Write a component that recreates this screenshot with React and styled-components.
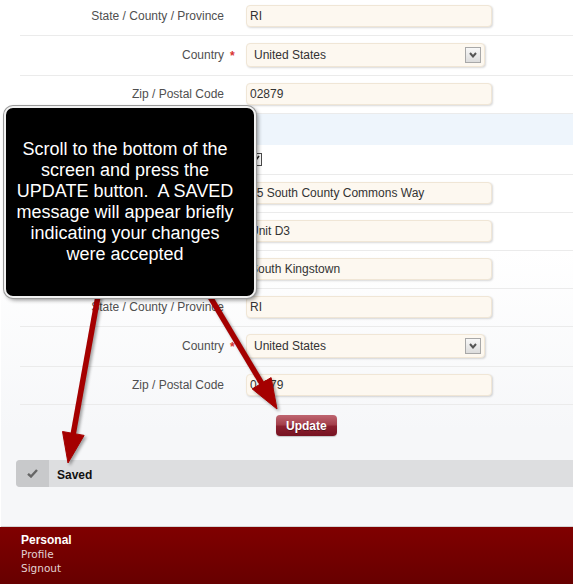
import styled, { createGlobalStyle } from 'styled-components';

const GlobalStyle = createGlobalStyle`
  html, body {
    margin: 0;
    height: 100%;
    overflow: hidden;
  }
  body {
    background: #fff;
    font-family: "Liberation Sans", Arial, sans-serif;
  }
`;

const Page = styled.div`
  position: relative;
  display: flex;
  flex-direction: column;
  width: 573px;
  height: 584px;
  overflow: hidden;
`;

const Main = styled.div`
  flex: 1;
  min-height: 0;
  margin-left: 1px;
  background: linear-gradient(180deg, #ffffff 0px, #ffffff 250px, #f6f7f9 430px, #f6f7f9 100%);
  border-bottom: 1px solid #d4d4d4;
`;

const Form = styled.div`
  margin-top: -2px;
`;

const Row = styled.div`
  display: grid;
  grid-template-columns: 204px 22px 1fr;
  align-items: center;
  margin-left: 19px;
  padding: ${(p) => (p.$tight ? '8px 0' : '7px 0 8px')};
  border-bottom: 1px solid #ebebeb;
`;

const Label = styled.div`
  text-align: right;
  font-size: 12px;
  color: #4f4f4f;
  white-space: nowrap;
`;

const Required = styled.span`
  padding-left: 6px;
  font-size: 12px;
  font-weight: bold;
  color: #d83232;
`;

const TextBox = styled.div`
  width: 246px;
  height: 22px;
  box-sizing: border-box;
  padding: 0 3px;
  line-height: 20px;
  font-size: 12px;
  color: #333;
  background: #fdf8f0;
  border: 1px solid #f0e6d6;
  border-radius: 4px;
  box-shadow: 1px 1px 2px rgba(0, 0, 0, 0.15);
  white-space: nowrap;
`;

const SelectBox = styled(TextBox)`
  width: 239px;
  height: 24px;
  padding: 0 3px 0 7px;
  display: flex;
  align-items: center;
  justify-content: space-between;
`;

const DropButton = styled.span`
  display: flex;
  align-items: center;
  justify-content: center;
  width: 16px;
  height: 16px;
  box-sizing: border-box;
  border: 1px solid #a8a8a8;
  background: linear-gradient(180deg, #f8f8f8, #dcdcdc);
`;

const SectionBand = styled.div`
  margin-left: 19px;
  height: 31px;
  background: #eef5fc;
`;

const CheckBox = styled.span`
  display: flex;
  align-items: center;
  justify-content: center;
  width: 13px;
  height: 13px;
  margin-left: 3px;
  box-sizing: border-box;
  border: 1px solid #4a4a4a;
  background: #fff;
`;

const ButtonRow = styled.div`
  padding: 10px 0 0 275px;
`;

const UpdateButton = styled.button`
  height: 21px;
  padding: 0 10px;
  border: 0;
  border-radius: 4px;
  background: linear-gradient(180deg, #bf6671 0%, #a4404c 45%, #8a1f2e 55%, #771322 100%);
  color: #fff;
  font-family: "Liberation Sans", Arial, sans-serif;
  font-size: 12px;
  font-weight: bold;
  text-shadow: 0 1px 0 rgba(0, 0, 0, 0.35);
  box-shadow: 0 1px 1px rgba(0, 0, 0, 0.2);
`;

const SavedBar = styled.div`
  display: flex;
  height: 27px;
  margin: 24px -10px 0 15px;
  border-radius: 4px;
  overflow: hidden;
  background: #dddee0;
`;

const SavedIcon = styled.span`
  display: flex;
  align-items: center;
  justify-content: center;
  width: 33px;
  background: #c8c9cb;
`;

const SavedText = styled.span`
  display: flex;
  align-items: center;
  padding: 2px 0 0 8px;
  font-size: 12px;
  font-weight: bold;
  color: #111;
`;

const Footer = styled.div`
  flex: none;
  height: 57px;
  box-sizing: border-box;
  padding: 6px 0 0 21px;
  background: linear-gradient(180deg, #800000, #670000);
`;

const FooterTitle = styled.div`
  font-size: 12px;
  font-weight: bold;
  line-height: 14px;
  color: #fff;
`;

const FooterLink = styled.div`
  font-family: "DejaVu Sans", Verdana, sans-serif;
  font-size: 10.5px;
  line-height: 14px;
  color: #e2d2d2;
`;

const Callout = styled.div`
  position: absolute;
  left: 4px;
  top: 106px;
  z-index: 2;
  width: 252px;
  height: 192px;
  box-sizing: border-box;
  display: flex;
  align-items: center;
  justify-content: center;
  padding-right: 10px;
  border: 2px solid #f2f2f2;
  border-radius: 9px;
  background: #000;
  box-shadow: 0 0 0 1px #9a9a9a, 2px 2px 4px rgba(0, 0, 0, 0.45);
  color: #fff;
  text-align: center;
  font-size: 18px;
  line-height: 21px;
`;

const Pointers = styled.svg`
  position: absolute;
  left: 0;
  top: 0;
  z-index: 1;
  pointer-events: none;
  filter: drop-shadow(2px 2px 1.5px rgba(0, 0, 0, 0.35));
`;

function Arrow({ from, to, head = 30, half = 12 }) {
  const dx = to[0] - from[0];
  const dy = to[1] - from[1];
  const len = Math.hypot(dx, dy);
  const ux = dx / len;
  const uy = dy / len;
  const bx = to[0] - ux * head;
  const by = to[1] - uy * head;
  const nx = -uy;
  const ny = ux;
  const points = [
    [to[0], to[1]],
    [bx + nx * half, by + ny * half],
    [bx - nx * half, by - ny * half],
  ]
    .map((p) => p.map((v) => v.toFixed(1)).join(','))
    .join(' ');

  return (
    <g fill="#a50000" stroke="#a50000">
      <line x1={from[0]} y1={from[1]} x2={bx + ux * 2} y2={by + uy * 2} strokeWidth="5.5" />
      <polygon points={points} strokeWidth="1" strokeLinejoin="round" />
    </g>
  );
}

const Chevron = () => (
  <svg width="8" height="6" viewBox="0 0 8 6">
    <path d="M1 1 L4 4.5 L7 1" fill="none" stroke="#555" strokeWidth="2" />
  </svg>
);

function Field({ label, value, required }) {
  return (
    <Row>
      <Label>{label}</Label>
      <span>{required && <Required>*</Required>}</span>
      <TextBox>{value}</TextBox>
    </Row>
  );
}

function CountryField() {
  return (
    <Row>
      <Label>Country</Label>
      <span>
        <Required>*</Required>
      </span>
      <SelectBox>
        United States
        <DropButton>
          <Chevron />
        </DropButton>
      </SelectBox>
    </Row>
  );
}

export default function App() {
  return (
    <>
      <GlobalStyle />
      <Page>
        <Main>
          <Form>
            <Field label="State / County / Province" value="RI" />
            <CountryField />
            <Field label="Zip / Postal Code" value="02879" />

            <SectionBand />
            <Row $tight>
              <Label />
              <span />
              <CheckBox>
                <svg width="9" height="9" viewBox="0 0 9 9">
                  <path d="M1 4.5 L3.5 7 L8 1" fill="none" stroke="#222" strokeWidth="1.6" />
                </svg>
              </CheckBox>
            </Row>
            <Field value="25 South County Commons Way" />
            <Field value="Unit D3" />
            <Field value="South Kingstown" />
            <Field label="State / County / Province" value="RI" />
            <CountryField />
            <Field label="Zip / Postal Code" value="02879" />

            <ButtonRow>
              <UpdateButton type="button">Update</UpdateButton>
            </ButtonRow>
          </Form>

          <SavedBar>
            <SavedIcon>
              <svg width="11" height="9" viewBox="0 0 11 9">
                <path d="M1 4.8 L4 7.5 L10 1" fill="none" stroke="#666" strokeWidth="2.4" />
              </svg>
            </SavedIcon>
            <SavedText>Saved</SavedText>
          </SavedBar>
        </Main>

        <Footer>
          <FooterTitle>Personal</FooterTitle>
          <FooterLink>Profile</FooterLink>
          <FooterLink>Signout</FooterLink>
        </Footer>

        <Pointers width="573" height="584" viewBox="0 0 573 584">
          <Arrow from={[100, 285]} to={[68, 463]} half={11} />
          <Arrow from={[203, 285]} to={[277, 409]} half={11} />
        </Pointers>

        <Callout>
          <div>
            Scroll to the bottom of the
            <br />
            screen and press the
            <br />
            UPDATE button.{'\u00a0'} A SAVED
            <br />
            message will appear briefly
            <br />
            indicating your changes
            <br />
            were accepted
          </div>
        </Callout>
      </Page>
    </>
  );
}
